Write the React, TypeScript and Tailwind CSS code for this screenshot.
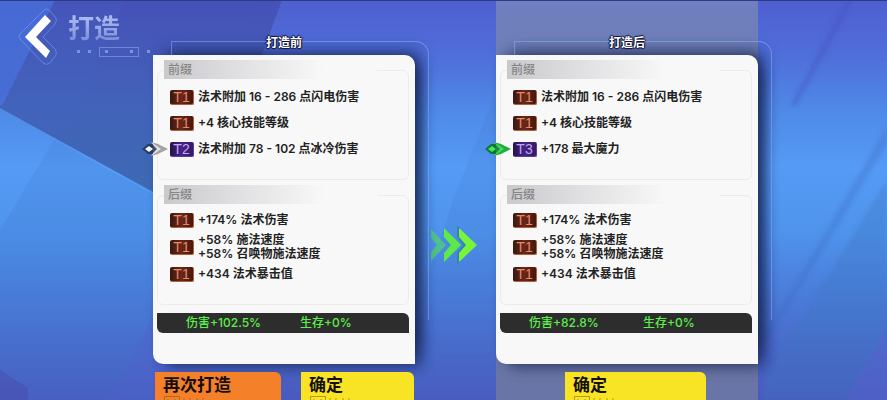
import { clsx } from "clsx";

type Affix = { tier: string; lines: string[]; marker?: "old" | "new" };

type Panel = {
  title: string;
  prefixes: Affix[];
  suffixes: Affix[];
  damage: string;
  survival: string;
};

const suffixes: Affix[] = [
  { tier: "T1", lines: ["+174% 法术伤害"] },
  { tier: "T1", lines: ["+58% 施法速度", "+58% 召唤物施法速度"] },
  { tier: "T1", lines: ["+434 法术暴击值"] },
];

const before: Panel = {
  title: "打造前",
  prefixes: [
    { tier: "T1", lines: ["法术附加 16 - 286 点闪电伤害"] },
    { tier: "T1", lines: ["+4 核心技能等级"] },
    { tier: "T2", lines: ["法术附加 78 - 102 点冰冷伤害"], marker: "old" },
  ],
  suffixes,
  damage: "伤害+102.5%",
  survival: "生存+0%",
};

const after: Panel = {
  title: "打造后",
  prefixes: [
    { tier: "T1", lines: ["法术附加 16 - 286 点闪电伤害"] },
    { tier: "T1", lines: ["+4 核心技能等级"] },
    { tier: "T3", lines: ["+178 最大魔力"], marker: "new" },
  ],
  suffixes,
  damage: "伤害+82.8%",
  survival: "生存+0%",
};

function Backdrop() {
  return (
    <svg
      className="absolute inset-0 -z-20 h-full w-full"
      viewBox="0 0 887 400"
      preserveAspectRatio="none"
      aria-hidden="true"
    >
      <defs>
        <linearGradient id="sky" x1="0" y1="0" x2="0" y2="1">
          <stop offset="0" stopColor="#4f5fd0" />
          <stop offset="0.15" stopColor="#4f70da" />
          <stop offset="0.28" stopColor="#4f8ae8" />
          <stop offset="0.42" stopColor="#559bf5" />
          <stop offset="0.58" stopColor="#4f93ec" />
          <stop offset="0.72" stopColor="#4b7fdc" />
          <stop offset="0.86" stopColor="#4a6bcb" />
          <stop offset="1" stopColor="#4a59bd" />
        </linearGradient>
        <linearGradient id="shard" x1="0" y1="0" x2="0" y2="1">
          <stop offset="0" stopColor="#4651b8" />
          <stop offset="0.45" stopColor="#4262b9" />
          <stop offset="1" stopColor="#3c6cb2" />
        </linearGradient>
        <filter id="soft" x="-30%" y="-30%" width="160%" height="160%">
          <feGaussianBlur stdDeviation="2" />
        </filter>
      </defs>
      <rect width="887" height="400" fill="url(#sky)" />
      <path d="M0 0H282L262 55L200 219L153 192L0 108Z" fill="url(#shard)" />
      <path d="M98 68L66 141L0 106L55 0H125Z" fill="#4463c4" opacity="0.2" />
      <path d="M0 0H55L2 106L0 105Z" fill="#4974e0" opacity="0.7" />
      <path d="M54 140L153 194V400H0V230Z" fill="#3f7dd0" opacity="0.22" />
      <path d="M0 370L28 388V400H0Z" fill="#4a46a8" opacity="0.4" />
      <path d="M153 315L110 400H200Z" fill="#5260ce" opacity="0.3" />
      <path d="M497 90L453 200L410 330V400H497Z" fill="#3f70cc" opacity="0.15" />
      <g filter="url(#soft)">
        <path d="M846 0H854L796 106H790Z" fill="#4650bf" opacity="0.4" />
        <path d="M887 126V144L772 334L764 338Z" fill="#3a66bd" opacity="0.3" />
        <path d="M887 180V330L848 400H762L766 374Z" fill="#3f76c0" opacity="0.35" />
      </g>
      <path d="M887 328L846 400H887Z" fill="#5565cf" opacity="0.45" />
      <rect width="887" height="1" fill="#2b3c85" />
    </svg>
  );
}

function BackIcon() {
  return (
    <svg width="44" height="60" viewBox="16 7 44 60" fill="none" aria-hidden="true">
      <path
        d="M43 11Q46 7 50 11L56 18Q57 21 55 24L43 37L55 49Q57 52 56 55L50 63Q46 66 43 63L20 39Q18 37 20 34Z"
        stroke="#7d9cf0"
        strokeOpacity="0.6"
      />
      <path d="M45 15L51 21L36 37L50 51L46 58L25 37Z" fill="#fff" />
    </svg>
  );
}

function TitleDots() {
  return (
    <svg className="ml-2" width="76" height="10" viewBox="0 0 76 10" fill="#7f93dc" aria-hidden="true">
      <rect x="1" y="3" width="3" height="3" />
      <rect x="12" y="3" width="3" height="3" />
      <rect x="29" y="3" width="3" height="3" />
      <rect x="54" y="3" width="3" height="3" />
      <rect x="71" y="3" width="3" height="3" />
      <rect x="23.5" y="0.5" width="39" height="9" fill="none" stroke="#6f86d8" />
    </svg>
  );
}

function Marker({ kind }: { kind: "old" | "new" }) {
  const isNew = kind === "new";
  return (
    <svg
      className="absolute top-1/2 -left-3 -translate-y-1/2"
      width="26"
      height="16"
      viewBox="0 0 26 16"
      aria-hidden="true"
    >
      <path d="M0 8L6 3H12L18 8L12 13H6Z" fill={isNew ? "#0c6b25" : "#223252"} opacity="0.85" />
      <path d="M9 1L16 3L26 8L16 13L9 15L16 8Z" fill={isNew ? "#1fae3c" : "#a3a3a2"} />
      <path d="M9 1L19 8L9 15L12 11L15 8L12 5Z" fill={isNew ? "#3fdf55" : "#e4e3e0"} />
      <path d="M3 8L7 5L11 8L7 11Z" fill={isNew ? "#35f04f" : "#eef6ff"} />
    </svg>
  );
}

function TierBadge({ tier }: { tier: string }) {
  return (
    <span
      className={clsx(
        "flex h-[15px] w-6 shrink-0 items-center justify-center rounded-[2px] border-r border-b bg-linear-to-r font-['Liberation_Sans',sans-serif] text-sm leading-[14px]",
        tier === "T1"
          ? "border-[#b0603c] from-[#3a1810] via-[#6b2717] to-[#45180f] text-[#e8886c]"
          : "border-[#5a3d9c] from-[#26124c] via-[#432588] to-[#331a66] text-[#c8a4f0]",
      )}
    >
      {tier}
    </span>
  );
}

function AffixSection({ name, affixes, listClass }: { name: string; affixes: Affix[]; listClass: string }) {
  return (
    <section className="relative min-h-[120px]">
      <div className="absolute inset-x-0 top-2.5 bottom-0 rounded-md border border-[#efebe8]" />
      <h3 className="relative mr-8 ml-[7px] h-[19px] bg-linear-to-r from-[#c9c9cc] via-[#e0e0e2] via-35% to-[#f8f8f8] to-75% pl-1 text-xs leading-[19px] font-medium text-[#858585]">
        {name}
      </h3>
      <ul className={clsx("relative flex flex-col pl-[13px]", listClass)}>
        {affixes.map((affix) => (
          <li key={affix.lines[0]} className="flex min-h-5 items-center gap-1">
            {affix.marker && (
              <span className="relative -ml-4 h-5 w-3">
                <Marker kind={affix.marker} />
              </span>
            )}
            <TierBadge tier={affix.tier} />
            <div className="text-xs leading-[14px] font-semibold whitespace-nowrap text-[#222]">
              {affix.lines.map((line) => (
                <p key={line}>{line}</p>
              ))}
            </div>
          </li>
        ))}
      </ul>
    </section>
  );
}

function CraftCard({ panel }: { panel: Panel }) {
  return (
    <>
      <h2 className="relative z-10 pt-[33px] text-center text-xs leading-5 font-bold text-white [text-shadow:1px_0_1px_#0b1030,-1px_0_1px_#0b1030,0_1px_1px_#0b1030,0_-1px_1px_#0b1030]">
        {panel.title}
      </h2>
      <div className="relative mt-0.5">
        <div className="relative rounded-tr-[10px] rounded-bl-[10px] bg-[#f8f8f8] pt-[5px] pr-1.5 pb-[31px] pl-1 shadow-[6px_0_14px_-3px_rgba(18,28,70,0.55),10px_-10px_16px_-6px_rgba(18,28,70,0.55),10px_8px_14px_-4px_rgba(18,28,70,0.45)]">
          <div className="flex flex-col gap-[5px]">
            <AffixSection name="前缀" affixes={panel.prefixes} listClass="mt-2 gap-1.5" />
            <AffixSection name="后缀" affixes={panel.suffixes} listClass="mt-1.5 gap-[3px]" />
          </div>
          <div className="mt-2 grid h-5 grid-cols-[114fr_109fr] items-center rounded-tr-md rounded-bl-md bg-[#2d2d2d] pl-[29px] text-xs font-medium text-[#5cf04a]">
            <span>{panel.damage}</span>
            <span>{panel.survival}</span>
          </div>
        </div>
        <div className="absolute -top-3.5 -right-3.5 left-[18px] h-3.5 rounded-tr-2xl border-t border-l border-[#8fb2f8]/50" />
        <div className="absolute -top-3.5 -right-3.5 bottom-11 w-3.5 rounded-tr-2xl border-r border-[#8fb2f8]/50" />
      </div>
    </>
  );
}

function ActionButton({ label, tone, className }: { label: string; tone: "orange" | "yellow"; className?: string }) {
  return (
    <button
      type="button"
      className={clsx(
        "relative flex h-12 flex-col items-start gap-px rounded-tr-md rounded-bl-md pt-1 pl-2 text-[17px] leading-[18px] font-bold text-[#15100a]",
        tone === "orange" ? "bg-[#f5802a]" : "bg-[#f8e424]",
        className,
      )}
    >
      {label}
      <svg width="48" height="10" viewBox="0 0 48 10" fill="none" stroke="#6a5410" strokeOpacity="0.5" aria-hidden="true">
        <path d="M1.5 10V1.5H16.5V10M5 4V5M12 4V5M21 3V5M27 3V5M34 3V5M40 3V5" />
      </svg>
    </button>
  );
}

function UpgradeArrows() {
  return (
    <svg width="50" height="40" viewBox="0 0 50 40" aria-hidden="true">
      <path d="M0 4L15 20L0 36V27L6 20L0 13Z" fill="#52dc5c" opacity="0.65" />
      <path d="M13 3L30 20L13 37V28L20 20L13 12Z" fill="#5cea48" />
      <path d="M26 1V12L32 20L26 28V39L29 37V28L36 20L29 12V3Z" fill="#2f7fb0" opacity="0.8" />
      <path d="M28 3L46 20L28 37V28L35 20L28 12Z" fill="#76f53c" />
    </svg>
  );
}

export default function App() {
  return (
    <main className="relative isolate grid h-screen grid-cols-[153fr_262fr_81fr_262fr_129fr] overflow-hidden font-['Inter','Noto_Sans_CJK_SC',sans-serif]">
      <Backdrop />

      <header className="flex items-start pt-[7px] pl-4">
        <button type="button" aria-label="返回" className="shrink-0">
          <BackIcon />
        </button>
        <div className="ml-2 pt-1.5">
          <h1 className="bg-linear-to-b from-[#b4c1f2] to-[#7387d4] bg-clip-text text-[26px] leading-8 font-bold text-transparent">
            打造
          </h1>
          <div className="pt-0.5">
            <TitleDots />
          </div>
        </div>
      </header>

      <div>
        <CraftCard panel={before} />
        <div className="mt-2 grid grid-cols-[126fr_113fr] gap-5 pr-px pl-0.5">
          <ActionButton label="再次打造" tone="orange" />
          <ActionButton label="确定" tone="yellow" />
        </div>
      </div>

      <div className="flex justify-center pt-[225px]">
        <UpgradeArrows />
      </div>

      <div className="relative">
        <div className="absolute inset-x-0 top-px bottom-0 -z-10 bg-linear-to-b from-[#6f7fc0] via-[#6f7d98] to-[#6874a8]" />
        <CraftCard panel={after} />
        <ActionButton label="确定" tone="yellow" className="mt-2 ml-[69px] w-[141px]" />
      </div>
    </main>
  );
}
